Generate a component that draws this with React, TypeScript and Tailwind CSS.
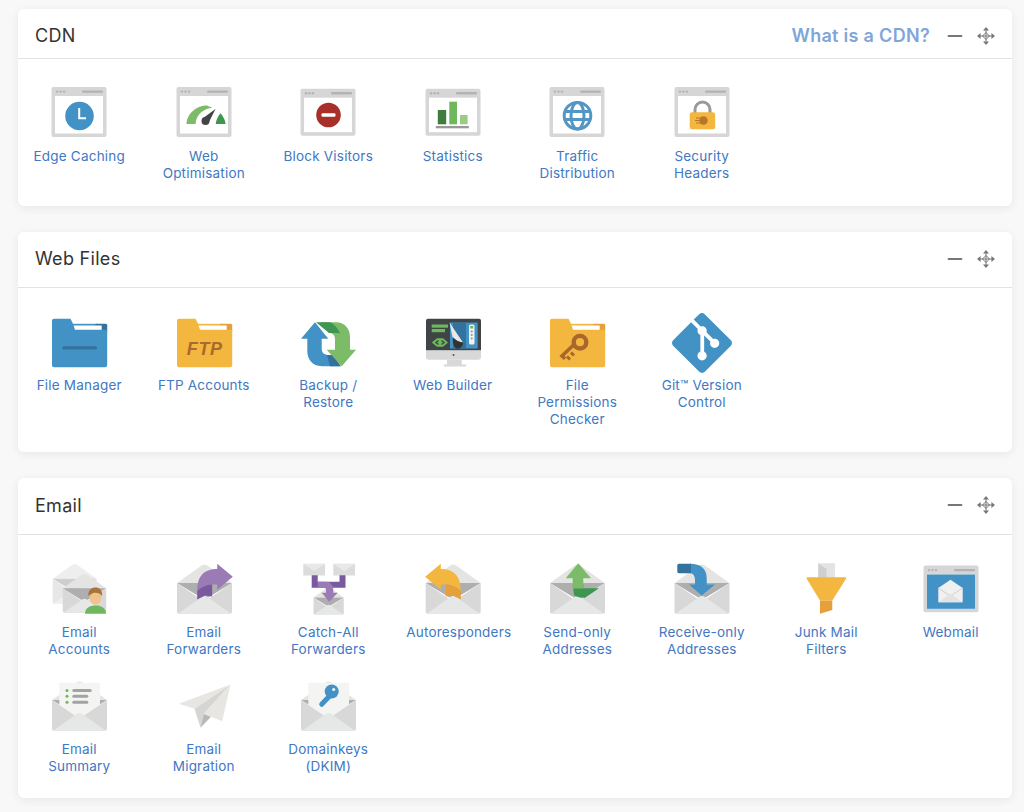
import type { ReactNode } from 'react'
import { Minus } from 'lucide-react'
import { SiGit } from 'react-icons/si'

const BLUE = '#4292c6'
const YELLOW = '#f3b63f'
const ORANGE = '#e5a03c'
const PURPLE = '#9a7bb5'
const DARK_PURPLE = '#7a5a9e'

function Svg({ children }: { children: ReactNode }) {
  return (
    <svg viewBox="0 0 64 56" className="h-14 w-16 shrink-0 overflow-visible">
      {children}
    </svg>
  )
}

function MoveIcon() {
  return (
    <svg viewBox="0 0 18 18" className="ml-[11px] h-[18px] w-[18px] text-[#777]" fill="currentColor">
      <path d="M9 0 12 3.6H6ZM9 18 6 14.4H12ZM0 9 3.6 6V12ZM18 9 14.4 12V6Z" />
      <path d="M9 3V15M3 9H15M9 5.5 12.5 9 9 12.5 5.5 9Z" fill="none" stroke="currentColor" strokeWidth="1" />
    </svg>
  )
}

function BrowserWindow({ y = 3, h = 50, children }: { y?: number; h?: number; children?: ReactNode }) {
  return (
    <>
      <rect x="4.5" y={y} width="55" height={h} rx="2" fill="#d6d6d6" />
      <rect x="8" y={y + 9} width="48" height={h - 12.5} fill="#fff" />
      <circle cx="10" cy={y + 4.6} r="1.2" fill="#b3b3b3" />
      <circle cx="13.5" cy={y + 4.6} r="1.2" fill="#b3b3b3" />
      <circle cx="17" cy={y + 4.6} r="1.2" fill="#b3b3b3" />
      <rect x="35" y={y + 3.4} width="21" height="2.4" rx="1.2" fill="#b3b3b3" />
      {children}
    </>
  )
}

function Folder({ body, dark, children }: { body: string; dark: string; children?: ReactNode }) {
  return (
    <>
      <rect x="26" y="8.8" width="24" height="3" fill={body} />
      <rect x="48" y="8.8" width="12.2" height="9" rx="1.5" fill={dark} />
      <rect x="26.3" y="10.5" width="28.4" height="6" fill="#fff" />
      <path
        d="M7 3.8H23.5L26 8.8 28 14.8H60.2V50.2A2 2 0 0 1 58.2 52.2H7A2 2 0 0 1 5 50.2V5.8A2 2 0 0 1 7 3.8Z"
        fill={body}
      />
      {children}
    </>
  )
}

// open envelope, 55x50; children go between the back flap and the front
function Envelope({
  x = 5,
  y = 3.8,
  s = 1,
  opacity = 1,
  children,
}: {
  x?: number
  y?: number
  s?: number
  opacity?: number
  children?: ReactNode
}) {
  return (
    <g transform={`translate(${x} ${y}) scale(${s})`} opacity={opacity}>
      <path d="M0 19.2 25 1.4Q27.5 0 30 1.4L55 19.2Z" fill="#e4e4e3" />
      <path d="M0 19.2H55L27.5 36Z" fill="#aeaeae" />
      {children}
      <path d="M0 19.2 27.5 38 55 19.2V48A2 2 0 0 1 53 50H2A2 2 0 0 1 0 48Z" fill="#d8d8d8" />
      <path d="M1 50 25 33Q27.5 31.5 30 33L54 50Z" fill="#e6e8e7" />
    </g>
  )
}

function CurvedArrow({ light, dark }: { light: string; dark: string }) {
  return (
    <>
      <path d="M25.2 31C25.2 15 33 9 45.2 9V3.8L60.8 16.8 45.2 29.8V24.5H40.2C36 24.5 30 26 25.2 31Z" fill={light} />
      <path d="M25.2 39.5V31C30 26 36 24.5 40.2 24.5V36.5L33 35.5Z" fill={dark} />
    </>
  )
}

function EdgeCaching() {
  return (
    <Svg>
      <BrowserWindow>
        <circle cx="32.5" cy="32" r="14.3" fill={BLUE} />
        <path d="M32.2 24V34.2H39" fill="none" stroke="#fff" strokeWidth="2" />
      </BrowserWindow>
    </Svg>
  )
}

function WebOptimisation() {
  return (
    <Svg>
      <BrowserWindow>
        <path d="M14.5 40C15 29 25 21.5 35 21.5L40.2 23.7C33 24 24 30 23.5 40Z" fill="#7cbb67" />
        <path d="M48.5 29.3C50 31 53.5 36 53.5 40H43.8C43.8 36 47 31 48.5 29.3Z" fill="#3f9650" />
        <circle cx="33.5" cy="37" r="4" fill="#444" />
        <path d="M30.5 34.5 43.5 25 36.5 39Z" fill="#444" />
      </BrowserWindow>
    </Svg>
  )
}

function BlockVisitors() {
  return (
    <Svg>
      <BrowserWindow y={4.7} h={47}>
        <circle cx="32.5" cy="31" r="12.3" fill="#a8302a" />
        <rect x="25.5" y="29.2" width="14" height="3.6" rx="1.2" fill="#fff" />
      </BrowserWindow>
    </Svg>
  )
}

function Statistics() {
  return (
    <Svg>
      <BrowserWindow y={4.7} h={47}>
        <rect x="16.8" y="26" width="8.4" height="14.3" fill="#3f7d3f" />
        <rect x="28.3" y="17.7" width="7.7" height="22.6" fill="#6fb75c" />
        <rect x="39" y="31" width="7.6" height="9.3" fill="#9bcb85" />
        <rect x="14.8" y="42" width="33" height="2.3" fill="#999" />
      </BrowserWindow>
    </Svg>
  )
}

function TrafficDistribution() {
  return (
    <Svg>
      <BrowserWindow>
        <g fill="none" stroke="#5296c6" strokeWidth="3">
          <circle cx="32.5" cy="31.7" r="13.3" />
          <ellipse cx="32.5" cy="31.7" rx="6.5" ry="13.3" />
          <path d="M20.5 27.5H44.5M20.5 35.5H44.5" />
        </g>
      </BrowserWindow>
    </Svg>
  )
}

function SecurityHeaders() {
  return (
    <Svg>
      <BrowserWindow>
        <path d="M25 29V25.5A7.5 7.5 0 0 1 40 25.5V29" fill="none" stroke="#9a9a9a" strokeWidth="3" />
        <rect x="19.7" y="28.3" width="25.5" height="17" rx="2.5" fill={YELLOW} />
        <circle cx="33.5" cy="36.5" r="4.2" fill="#b9752a" />
        <path d="M26 34H32M25 36.5H32M26 39H32" stroke="#b9752a" strokeWidth="1" />
      </BrowserWindow>
    </Svg>
  )
}

function FileManager() {
  return (
    <Svg>
      <Folder body={BLUE} dark="#33729c">
        <rect x="15.3" y="31.2" width="34.7" height="3.3" rx="1.6" fill="#33729c" />
      </Folder>
    </Svg>
  )
}

function FtpAccounts() {
  return (
    <Svg>
      <Folder body={YELLOW} dark={ORANGE}>
        <text
          x="32.7"
          y="40"
          textAnchor="middle"
          fontFamily="Liberation Sans, sans-serif"
          fontWeight="700"
          fontStyle="italic"
          fontSize="18"
          letterSpacing="0.6"
          fill="#a96a2c"
        >
          FTP
        </text>
      </Folder>
    </Svg>
  )
}

function BackupRestore() {
  return (
    <Svg>
      <path d="M19 7.2 32.3 23.8H25.7V33C25.7 38 28 40 33 40L44 51.2H26C16 51.2 11.3 44 11.3 36V23.8H5Z" fill={BLUE} />
      <path d="M31 40H37L45 51.2H34Z" fill="#33729c" />
      <path d="M25 7.2H40C49 7.2 54 14 54 22V34.8H60L45.7 51.2 30.7 34.8H39V25C39 20 37 18 33 18Z" fill="#7cbb67" />
      <path d="M20 7.2H34C38 9 42 13 44 18.5 42 18 40 18 33 18Z" fill="#3f9650" />
    </Svg>
  )
}

function WebBuilder() {
  return (
    <Svg>
      <path d="M7 3.8H58A2 2 0 0 1 60 5.8V35.5H5V5.8A2 2 0 0 1 7 3.8Z" fill="#3f4447" />
      <path d="M5 35.5H60V42A2.8 2.8 0 0 1 57.2 44.8H7.8A2.8 2.8 0 0 1 5 42Z" fill="#d8d8d8" />
      <circle cx="32.5" cy="40" r="1" fill="#555" />
      <rect x="26" y="44.8" width="14.7" height="5" fill="#d8d8d8" />
      <rect x="22.7" y="49.5" width="22.7" height="2" rx="1" fill="#d8d8d8" />
      <rect x="29" y="7.5" width="27.7" height="26" fill={BLUE} />
      <rect x="32" y="7.5" width="13" height="26" fill="#33729c" />
      <path d="M28.5 7.5 42 27.5C38 27 34 25 31.5 22Z" fill="#e8e8e8" />
      <path d="M32 22.5C35 25.5 38 27 42 27.5 42.5 31 39 34.5 35.5 33.5 32.5 32 31.5 27 32 22.5Z" fill="#333" />
      <rect x="48" y="9.5" width="5.5" height="20" rx="1.5" fill="#f2f2f2" />
      <rect x="49.2" y="11" width="3" height="2.5" fill="#6fb75c" />
      <circle cx="50.7" cy="16.5" r="1.1" fill="#999" />
      <circle cx="50.7" cy="20" r="1.1" fill="#999" />
      <circle cx="50.7" cy="23.5" r="1.1" fill="#999" />
      <rect x="10.7" y="9.5" width="16.3" height="3.2" fill="#6fb75c" />
      <rect x="10.7" y="14" width="13.3" height="3.2" fill="#6fb75c" />
      <path d="M10.7 27.5 16 23.3H22L27 27.5 22 31.7H16Z" fill="#6fb75c" />
      <path d="M17.5 25.5 15 27.5 17.5 29.5M20.5 25.5 23 27.5 20.5 29.5" fill="none" stroke="#3f4447" strokeWidth="1.4" />
    </Svg>
  )
}

function FilePermissions() {
  return (
    <Svg>
      <Folder body={YELLOW} dark={ORANGE}>
        <path d="M20 43.8 17 41 28.5 30" stroke="#a9672c" strokeWidth="3.6" fill="none" />
        <path d="M22 41.5 25 44.5M26 37.5 29 40.5" stroke="#a9672c" strokeWidth="3" />
        <circle cx="35" cy="27.2" r="6.3" fill="none" stroke="#a9672c" strokeWidth="4.4" />
      </Folder>
    </Svg>
  )
}

function GitIcon() {
  return <SiGit size={60} color={BLUE} className="shrink-0" />
}

function EmailAccounts() {
  return (
    <Svg>
      <Envelope x={5.7} y={3.5} s={0.8} opacity={0.6} />
      <Envelope x={15.7} y={13.2} s={0.79} />
      <path d="M38 53.8C38 48 43 45.5 48.5 45.5S59 48 59 53.8Z" fill="#6fb75c" />
      <ellipse cx="48.5" cy="36.5" rx="6" ry="8" fill="#efc48c" />
      <path d="M41.5 36C40.5 30 45 27.5 48.5 27.5S56 30 55 36C53 33 50 32.5 46 33Z" fill="#a9743c" />
    </Svg>
  )
}

function EmailForwarders() {
  return (
    <Svg>
      <Envelope />
      <CurvedArrow light={PURPLE} dark={DARK_PURPLE} />
    </Svg>
  )
}

function CatchAll() {
  return (
    <Svg>
      <rect x="7.3" y="3.8" width="21.7" height="11.7" fill="#dcdcdc" />
      <path d="M7.3 3.8H29L18.2 11Z" fill="#e9e9e9" />
      <rect x="37.3" y="3.8" width="21.7" height="11.7" fill="#dcdcdc" />
      <path d="M37.3 3.8H59L48.2 11Z" fill="#e9e9e9" />
      <Envelope x={17.5} y={27} s={0.55} />
      <path d="M18.7 15.2V24.8H46.5V15.2" fill="none" stroke={DARK_PURPLE} strokeWidth="6" />
      <path d="M21.7 21.8H30C34 21.8 37.3 25 37.3 30V32.8H41.7L33.3 41.8 25.7 32.8H30V30C30 28.5 29 27.8 28 27.8H21.7Z" fill={PURPLE} />
    </Svg>
  )
}

function Autoresponders() {
  return (
    <Svg>
      <Envelope x={4.7} />
      <g transform="translate(65 0) scale(-1 1)">
        <CurvedArrow light={YELLOW} dark={ORANGE} />
      </g>
    </Svg>
  )
}

function SendOnly() {
  return (
    <Svg>
      <Envelope />
      <path d="M27.7 24 29 35C31 37 36 38 40 37.8L54 28.2H38.3V24Z" fill="#3f9650" />
      <path d="M33.3 3.2 46 18.2H38.3V28.5H27.7V18.2H20.7Z" fill="#7cbb67" />
    </Svg>
  )
}

function ReceiveOnly() {
  return (
    <Svg>
      <Envelope x={4.5} />
      <path d="M20 3.8C31 3.8 36.7 9 36.7 18V24.5H45L31.7 35.5 19 24.5H25V20C25 15 22.5 13.2 20 13.2Z" fill={BLUE} />
      <path d="M8.8 3.8H21V13.2H8.8A1.5 1.5 0 0 1 7.3 11.8V5.3A1.5 1.5 0 0 1 8.8 3.8Z" fill="#33729c" />
    </Svg>
  )
}

function JunkFilters() {
  return (
    <Svg>
      <rect x="24.3" y="3.2" width="16.7" height="15" fill="#e4e4e3" />
      <path d="M24.3 3.2 32.5 9V18H24.3Z" fill="#cfcfcf" />
      <path d="M13.5 17.2H51.2Q52.7 17.2 52 18.7L38.3 40.5H26L12.7 18.7Q12 17.2 13.5 17.2Z" fill={YELLOW} />
      <path d="M26 40.5H38.3V50L26 53.8Z" fill={ORANGE} />
    </Svg>
  )
}

function Webmail() {
  return (
    <Svg>
      <BrowserWindow y={5.5} h={46.7}>
        <rect x="8" y="14.5" width="48" height="34.3" fill={BLUE} />
        <path d="M19.3 28 31.5 19.8 43.7 28V42.2H19.3Z" fill="#f0f0f0" />
        <path d="M19.3 28 31.5 36 43.7 28" fill="none" stroke="#d0d0d0" strokeWidth="1" />
        <path d="M19.8 42.2 31.5 33.5 43.2 42.2Z" fill="#e2e4e3" />
      </BrowserWindow>
    </Svg>
  )
}

function EmailSummary() {
  return (
    <Svg>
      <Envelope>
        <rect x="7.3" y="2" width="40.7" height="32" fill="#f4f4f2" />
        <circle cx="15" cy="9.7" r="1.5" fill="#6fb75c" />
        <circle cx="15" cy="15.4" r="1.5" fill="#6fb75c" />
        <circle cx="15" cy="21.4" r="1.5" fill="#6fb75c" />
        <rect x="20.3" y="8.2" width="19.4" height="3" rx="1.5" fill="#a3a3a3" />
        <rect x="20.3" y="13.9" width="16" height="3" rx="1.5" fill="#a3a3a3" />
        <rect x="20.3" y="19.9" width="16" height="3" rx="1.5" fill="#a3a3a3" />
      </Envelope>
    </Svg>
  )
}

function EmailMigration() {
  return (
    <Svg>
      <path d="M58.5 7.5 22.5 31.8 28.5 50.8 31.8 36.8Z" fill="#d5d5d3" />
      <path d="M28.5 50.8 31.8 36.8 39 39.8Z" fill="#b8b8b6" />
      <path d="M58.5 7.5 6.8 26.8 22.5 31.8Z" fill="#e8e6e3" />
      <path d="M58.5 7.5 31.8 36.8 50.2 44.2Z" fill="#e8e6e3" />
    </Svg>
  )
}

function Domainkeys() {
  return (
    <Svg>
      <Envelope>
        <rect x="7.3" y="2" width="40.7" height="32" fill="#f4f4f2" />
        <path d="M20.7 23.5 29 14.8" stroke={BLUE} strokeWidth="5" strokeLinecap="round" />
        <circle cx="30.7" cy="10.7" r="7" fill={BLUE} />
        <circle cx="32.7" cy="8.7" r="1.6" fill="#f4f4f2" />
      </Envelope>
    </Svg>
  )
}

type Tool = { label: string; icon: ReactNode; labelClass?: string }

const cdn: Tool[] = [
  { label: 'Edge Caching', icon: <EdgeCaching /> },
  { label: 'Web\nOptimisation', icon: <WebOptimisation /> },
  { label: 'Block Visitors', icon: <BlockVisitors /> },
  { label: 'Statistics', icon: <Statistics /> },
  { label: 'Traffic\nDistribution', icon: <TrafficDistribution /> },
  { label: 'Security\nHeaders', icon: <SecurityHeaders /> },
]

const webFiles: Tool[] = [
  { label: 'File Manager', icon: <FileManager /> },
  { label: 'FTP Accounts', icon: <FtpAccounts /> },
  { label: 'Backup /\nRestore', icon: <BackupRestore /> },
  { label: 'Web Builder', icon: <WebBuilder /> },
  { label: 'File\nPermissions\nChecker', icon: <FilePermissions /> },
  { label: 'Git™ Version\nControl', icon: <GitIcon /> },
]

const email: Tool[] = [
  { label: 'Email\nAccounts', icon: <EmailAccounts /> },
  { label: 'Email\nForwarders', icon: <EmailForwarders /> },
  { label: 'Catch-All\nForwarders', icon: <CatchAll /> },
  { label: 'Autoresponders', icon: <Autoresponders />, labelClass: 'ml-3' },
  { label: 'Send-only\nAddresses', icon: <SendOnly /> },
  { label: 'Receive-only\nAddresses', icon: <ReceiveOnly /> },
  { label: 'Junk Mail\nFilters', icon: <JunkFilters /> },
  { label: 'Webmail', icon: <Webmail /> },
  { label: 'Email\nSummary', icon: <EmailSummary /> },
  { label: 'Email\nMigration', icon: <EmailMigration /> },
  { label: 'Domainkeys\n(DKIM)', icon: <Domainkeys /> },
]

function Section({
  title,
  tools,
  headerClass,
  bodyClass,
  labelGap,
  action,
}: {
  title: string
  tools: Tool[]
  headerClass: string
  bodyClass: string
  labelGap: string
  action?: string
}) {
  return (
    <section className="rounded-md bg-white shadow-[0_2px_10px_rgba(0,0,0,0.07)]">
      <header className={`flex items-center justify-between border-b border-[#e3e3e3] pl-[17px] pr-[17px] ${headerClass}`}>
        <h2 className="text-[18px] tracking-[0.3px] text-[#333]">{title}</h2>
        <div className="flex items-center">
          {action && <a className="mr-[14px] text-[18px] font-semibold tracking-[0.3px] text-[#7fa6d9]">{action}</a>}
          <Minus size={22} strokeWidth={2.2} className="text-[#777]" />
          <MoveIcon />
        </div>
      </header>
      <div className={`-ml-px grid grid-cols-[repeat(8,124.5px)] gap-y-[19px] ${bodyClass}`}>
        {tools.map((tool) => (
          <a key={tool.label} className="flex flex-col items-center text-center">
            <div className="flex h-14 w-16 items-center justify-center">{tool.icon}</div>
            <span className={`whitespace-pre-line text-[13.5px] leading-[17px] tracking-[0.2px] text-[#3f78c3] ${labelGap} ${tool.labelClass ?? ''}`}>
              {tool.label}
            </span>
          </a>
        ))}
      </div>
    </section>
  )
}

export default function App() {
  return (
    <div className="flex min-h-screen flex-col gap-[26px] bg-[#f8f8f8] pb-[14px] pl-[18px] pr-[12px] pt-[9px] font-['Inter',sans-serif]">
      <Section
        title="CDN"
        tools={cdn}
        action="What is a CDN?"
        headerClass="h-[50px] pt-[4px]"
        bodyClass="pb-[24.5px] pt-[25px]"
        labelGap="mt-[7.5px]"
      />
      <Section
        title="Web Files"
        tools={webFiles}
        headerClass="h-[56px] pb-[2px]"
        bodyClass="pb-[24.5px] pt-[26.5px]"
        labelGap="mt-[6px]"
      />
      <Section
        title="Email"
        tools={email}
        headerClass="h-[57px] pb-[2px]"
        bodyClass="pb-[23.5px] pt-[24.5px]"
        labelGap="mt-[8px]"
      />
    </div>
  )
}
